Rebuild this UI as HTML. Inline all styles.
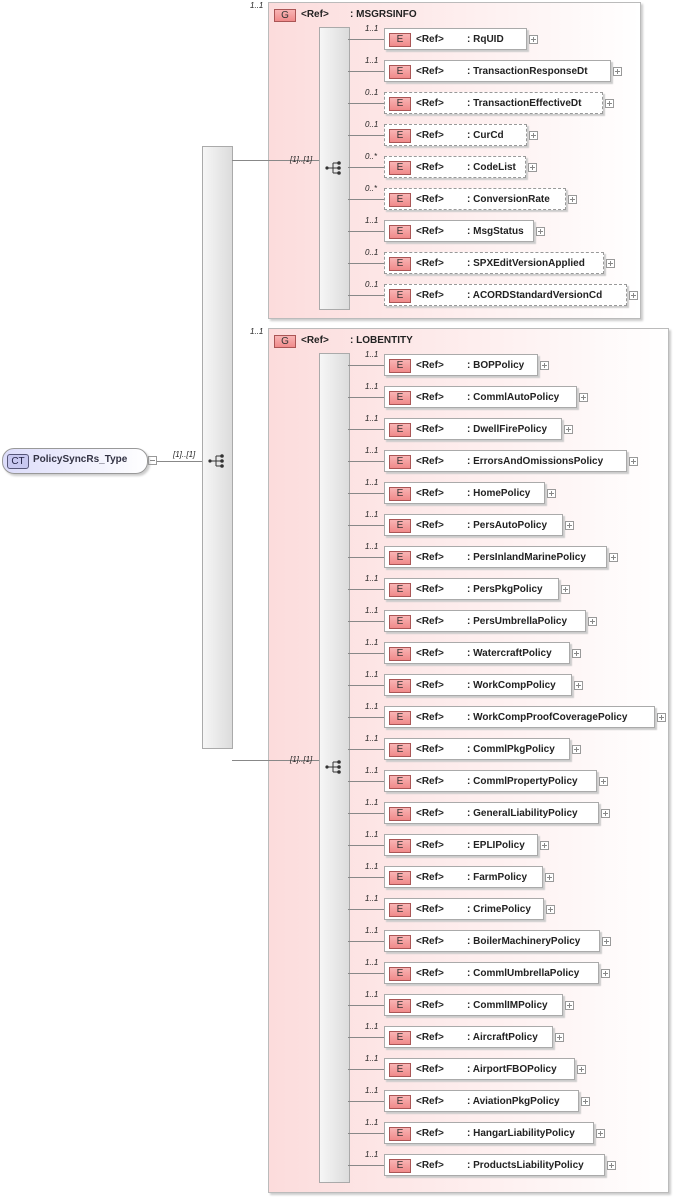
<!DOCTYPE html>
<html><head><meta charset="utf-8"><style>
body{margin:0;width:675px;height:1198px;background:#fff;position:relative;font-family:"Liberation Sans",sans-serif;overflow:hidden}
.a{position:absolute}
.grp{position:absolute;border:1px solid #bbb;background:linear-gradient(90deg,#fcdcdc,#fff);box-shadow:2px 2px 2px #ccc}
.bar{position:absolute;border:1px solid #aaa;background:linear-gradient(90deg,#f6f6f6,#dcdcdc)}
.card{position:absolute;font-size:8px;font-style:italic;color:#222}
.hl{position:absolute;height:1px;background:#888}
.r{position:absolute;left:348px;height:24px;display:flex;align-items:center}
.r .ln{width:36px;height:1px;background:#888}
.r .c{position:absolute;left:17px;top:-3px;font-size:8px;font-style:italic;color:#222}
.b{height:22px;border:1px solid #aaa;background:#fff;box-shadow:2px 2px 1px #ccc;position:relative;font-size:10px;font-weight:bold;color:#222;box-sizing:border-box}
.b.d{border:1px dashed #999}
.e{position:absolute;left:4px;top:4px;width:22px;height:14px;box-sizing:border-box;border:1px solid #a55;background:linear-gradient(#f8b4b4,#f08a8a);font-weight:normal;text-align:center;line-height:12px;color:#333;font-size:10px}
.rf{position:absolute;left:31px;top:5px}
.nm{position:absolute;left:82px;top:5px;white-space:nowrap}
.p{width:7px;height:7px;border:1px solid #999;margin-left:2px;position:relative;top:0px;background:#fff}
.p:before{content:"";position:absolute;left:1px;top:3px;width:5px;height:1px;background:#888}
.p:after{content:"";position:absolute;left:3px;top:1px;width:1px;height:5px;background:#888}
.g{position:absolute;width:22px;height:13px;border:1px solid #a55;background:linear-gradient(#f8b4b4,#f08a8a);font-size:10px;text-align:center;line-height:12px;box-sizing:border-box;color:#333}
.gt{position:absolute;font-size:10px;font-weight:bold;color:#222}
.sq{position:absolute;width:18px;height:14px}
</style></head><body>

<!-- CT -->
<div class="a" style="left:2px;top:448px;width:144px;height:24px;border:1px solid #999;border-radius:12px;background:linear-gradient(90deg,#dcdcfa,#fff);box-shadow:2px 2px 2px #ccc"></div>
<div class="a" style="left:7px;top:454px;width:20px;height:13px;border:1px solid #557;border-radius:3px;background:#c8c8f0;font-size:10px;text-align:center;line-height:13px;color:#224">CT</div>
<div class="a" style="left:33px;top:454px;font-size:10px;font-weight:bold;color:#334">PolicySyncRs_Type</div>
<div class="a" style="left:148px;top:456px;width:7px;height:7px;border:1px solid #999"><div class="a" style="left:1px;top:3px;width:5px;height:1px;background:#888"></div></div>
<div class="hl" style="left:157px;top:461px;width:45px"></div>
<div class="card" style="left:173px;top:450px">[1]..[1]</div>

<div class="bar" style="left:202px;top:146px;width:29px;height:601px"></div>
<svg class="sq" style="left:208px;top:454px" viewBox="0 0 18 14"><circle cx="2" cy="7" r="1.6" fill="#333"/><path d="M2 7H8M8 2V12M8 2H13M8 7H13M8 12H13" stroke="#333" fill="none"/><circle cx="14" cy="2" r="1.8" fill="#333"/><circle cx="14" cy="7" r="1.8" fill="#333"/><circle cx="14" cy="12" r="1.8" fill="#333"/></svg>

<!-- Group 1 -->
<div class="card" style="left:250px;top:1px">1..1</div>
<div class="grp" style="left:268px;top:2px;width:371px;height:315px"></div>
<div class="g" style="left:274px;top:9px">G</div>
<div class="gt" style="left:301px;top:9px">&lt;Ref&gt;</div>
<div class="gt" style="left:350px;top:9px">: MSGRSINFO</div>
<div class="bar" style="left:319px;top:27px;width:29px;height:281px"></div>
<svg class="sq" style="left:325px;top:161px" viewBox="0 0 18 14"><circle cx="2" cy="7" r="1.6" fill="#333"/><path d="M2 7H8M8 2V12M8 2H13M8 7H13M8 12H13" stroke="#333" fill="none"/><circle cx="14" cy="2" r="1.8" fill="#333"/><circle cx="14" cy="7" r="1.8" fill="#333"/><circle cx="14" cy="12" r="1.8" fill="#333"/></svg>

<div class="r" style="top:27px"><i class="c">1..1</i><div class="ln"></div><div class="b" style="width:143px"><span class="e">E</span><span class="rf">&lt;Ref&gt;</span><span class="nm">: RqUID</span></div><span class="p"></span></div>
<div class="r" style="top:59px"><i class="c">1..1</i><div class="ln"></div><div class="b" style="width:227px"><span class="e">E</span><span class="rf">&lt;Ref&gt;</span><span class="nm">: TransactionResponseDt</span></div><span class="p"></span></div>
<div class="r" style="top:91px"><i class="c">0..1</i><div class="ln"></div><div class="b d" style="width:219px"><span class="e">E</span><span class="rf">&lt;Ref&gt;</span><span class="nm">: TransactionEffectiveDt</span></div><span class="p"></span></div>
<div class="r" style="top:123px"><i class="c">0..1</i><div class="ln"></div><div class="b d" style="width:143px"><span class="e">E</span><span class="rf">&lt;Ref&gt;</span><span class="nm">: CurCd</span></div><span class="p"></span></div>
<div class="r" style="top:155px"><i class="c">0..*</i><div class="ln"></div><div class="b d" style="width:142px"><span class="e">E</span><span class="rf">&lt;Ref&gt;</span><span class="nm">: CodeList</span></div><span class="p"></span></div>
<div class="r" style="top:187px"><i class="c">0..*</i><div class="ln"></div><div class="b d" style="width:182px"><span class="e">E</span><span class="rf">&lt;Ref&gt;</span><span class="nm">: ConversionRate</span></div><span class="p"></span></div>
<div class="r" style="top:219px"><i class="c">1..1</i><div class="ln"></div><div class="b" style="width:150px"><span class="e">E</span><span class="rf">&lt;Ref&gt;</span><span class="nm">: MsgStatus</span></div><span class="p"></span></div>
<div class="r" style="top:251px"><i class="c">0..1</i><div class="ln"></div><div class="b d" style="width:220px"><span class="e">E</span><span class="rf">&lt;Ref&gt;</span><span class="nm">: SPXEditVersionApplied</span></div><span class="p"></span></div>
<div class="r" style="top:283px"><i class="c">0..1</i><div class="ln"></div><div class="b d" style="width:243px"><span class="e">E</span><span class="rf">&lt;Ref&gt;</span><span class="nm">: ACORDStandardVersionCd</span></div><span class="p"></span></div>

<!-- Group 2 -->
<div class="card" style="left:250px;top:327px">1..1</div>
<div class="grp" style="left:268px;top:328px;width:399px;height:863px"></div>
<div class="g" style="left:274px;top:335px">G</div>
<div class="gt" style="left:301px;top:335px">&lt;Ref&gt;</div>
<div class="gt" style="left:350px;top:335px">: LOBENTITY</div>
<div class="bar" style="left:319px;top:353px;width:29px;height:828px"></div>
<svg class="sq" style="left:325px;top:760px" viewBox="0 0 18 14"><circle cx="2" cy="7" r="1.6" fill="#333"/><path d="M2 7H8M8 2V12M8 2H13M8 7H13M8 12H13" stroke="#333" fill="none"/><circle cx="14" cy="2" r="1.8" fill="#333"/><circle cx="14" cy="7" r="1.8" fill="#333"/><circle cx="14" cy="12" r="1.8" fill="#333"/></svg>

<div class="hl" style="left:232px;top:160px;width:87px"></div>
<div class="card" style="left:290px;top:155px">[1]..[1]</div>
<div class="hl" style="left:232px;top:760px;width:87px"></div>
<div class="card" style="left:290px;top:755px">[1]..[1]</div>

<div class="r" style="top:353px"><i class="c">1..1</i><div class="ln"></div><div class="b" style="width:154px"><span class="e">E</span><span class="rf">&lt;Ref&gt;</span><span class="nm">: BOPPolicy</span></div><span class="p"></span></div>
<div class="r" style="top:385px"><i class="c">1..1</i><div class="ln"></div><div class="b" style="width:193px"><span class="e">E</span><span class="rf">&lt;Ref&gt;</span><span class="nm">: CommlAutoPolicy</span></div><span class="p"></span></div>
<div class="r" style="top:417px"><i class="c">1..1</i><div class="ln"></div><div class="b" style="width:178px"><span class="e">E</span><span class="rf">&lt;Ref&gt;</span><span class="nm">: DwellFirePolicy</span></div><span class="p"></span></div>
<div class="r" style="top:449px"><i class="c">1..1</i><div class="ln"></div><div class="b" style="width:243px"><span class="e">E</span><span class="rf">&lt;Ref&gt;</span><span class="nm">: ErrorsAndOmissionsPolicy</span></div><span class="p"></span></div>
<div class="r" style="top:481px"><i class="c">1..1</i><div class="ln"></div><div class="b" style="width:161px"><span class="e">E</span><span class="rf">&lt;Ref&gt;</span><span class="nm">: HomePolicy</span></div><span class="p"></span></div>
<div class="r" style="top:513px"><i class="c">1..1</i><div class="ln"></div><div class="b" style="width:179px"><span class="e">E</span><span class="rf">&lt;Ref&gt;</span><span class="nm">: PersAutoPolicy</span></div><span class="p"></span></div>
<div class="r" style="top:545px"><i class="c">1..1</i><div class="ln"></div><div class="b" style="width:223px"><span class="e">E</span><span class="rf">&lt;Ref&gt;</span><span class="nm">: PersInlandMarinePolicy</span></div><span class="p"></span></div>
<div class="r" style="top:577px"><i class="c">1..1</i><div class="ln"></div><div class="b" style="width:175px"><span class="e">E</span><span class="rf">&lt;Ref&gt;</span><span class="nm">: PersPkgPolicy</span></div><span class="p"></span></div>
<div class="r" style="top:609px"><i class="c">1..1</i><div class="ln"></div><div class="b" style="width:202px"><span class="e">E</span><span class="rf">&lt;Ref&gt;</span><span class="nm">: PersUmbrellaPolicy</span></div><span class="p"></span></div>
<div class="r" style="top:641px"><i class="c">1..1</i><div class="ln"></div><div class="b" style="width:186px"><span class="e">E</span><span class="rf">&lt;Ref&gt;</span><span class="nm">: WatercraftPolicy</span></div><span class="p"></span></div>
<div class="r" style="top:673px"><i class="c">1..1</i><div class="ln"></div><div class="b" style="width:188px"><span class="e">E</span><span class="rf">&lt;Ref&gt;</span><span class="nm">: WorkCompPolicy</span></div><span class="p"></span></div>
<div class="r" style="top:705px"><i class="c">1..1</i><div class="ln"></div><div class="b" style="width:271px"><span class="e">E</span><span class="rf">&lt;Ref&gt;</span><span class="nm">: WorkCompProofCoveragePolicy</span></div><span class="p"></span></div>
<div class="r" style="top:737px"><i class="c">1..1</i><div class="ln"></div><div class="b" style="width:186px"><span class="e">E</span><span class="rf">&lt;Ref&gt;</span><span class="nm">: CommlPkgPolicy</span></div><span class="p"></span></div>
<div class="r" style="top:769px"><i class="c">1..1</i><div class="ln"></div><div class="b" style="width:213px"><span class="e">E</span><span class="rf">&lt;Ref&gt;</span><span class="nm">: CommlPropertyPolicy</span></div><span class="p"></span></div>
<div class="r" style="top:801px"><i class="c">1..1</i><div class="ln"></div><div class="b" style="width:215px"><span class="e">E</span><span class="rf">&lt;Ref&gt;</span><span class="nm">: GeneralLiabilityPolicy</span></div><span class="p"></span></div>
<div class="r" style="top:833px"><i class="c">1..1</i><div class="ln"></div><div class="b" style="width:154px"><span class="e">E</span><span class="rf">&lt;Ref&gt;</span><span class="nm">: EPLIPolicy</span></div><span class="p"></span></div>
<div class="r" style="top:865px"><i class="c">1..1</i><div class="ln"></div><div class="b" style="width:159px"><span class="e">E</span><span class="rf">&lt;Ref&gt;</span><span class="nm">: FarmPolicy</span></div><span class="p"></span></div>
<div class="r" style="top:897px"><i class="c">1..1</i><div class="ln"></div><div class="b" style="width:160px"><span class="e">E</span><span class="rf">&lt;Ref&gt;</span><span class="nm">: CrimePolicy</span></div><span class="p"></span></div>
<div class="r" style="top:929px"><i class="c">1..1</i><div class="ln"></div><div class="b" style="width:216px"><span class="e">E</span><span class="rf">&lt;Ref&gt;</span><span class="nm">: BoilerMachineryPolicy</span></div><span class="p"></span></div>
<div class="r" style="top:961px"><i class="c">1..1</i><div class="ln"></div><div class="b" style="width:215px"><span class="e">E</span><span class="rf">&lt;Ref&gt;</span><span class="nm">: CommlUmbrellaPolicy</span></div><span class="p"></span></div>
<div class="r" style="top:993px"><i class="c">1..1</i><div class="ln"></div><div class="b" style="width:179px"><span class="e">E</span><span class="rf">&lt;Ref&gt;</span><span class="nm">: CommlIMPolicy</span></div><span class="p"></span></div>
<div class="r" style="top:1025px"><i class="c">1..1</i><div class="ln"></div><div class="b" style="width:169px"><span class="e">E</span><span class="rf">&lt;Ref&gt;</span><span class="nm">: AircraftPolicy</span></div><span class="p"></span></div>
<div class="r" style="top:1057px"><i class="c">1..1</i><div class="ln"></div><div class="b" style="width:191px"><span class="e">E</span><span class="rf">&lt;Ref&gt;</span><span class="nm">: AirportFBOPolicy</span></div><span class="p"></span></div>
<div class="r" style="top:1089px"><i class="c">1..1</i><div class="ln"></div><div class="b" style="width:195px"><span class="e">E</span><span class="rf">&lt;Ref&gt;</span><span class="nm">: AviationPkgPolicy</span></div><span class="p"></span></div>
<div class="r" style="top:1121px"><i class="c">1..1</i><div class="ln"></div><div class="b" style="width:210px"><span class="e">E</span><span class="rf">&lt;Ref&gt;</span><span class="nm">: HangarLiabilityPolicy</span></div><span class="p"></span></div>
<div class="r" style="top:1153px"><i class="c">1..1</i><div class="ln"></div><div class="b" style="width:221px"><span class="e">E</span><span class="rf">&lt;Ref&gt;</span><span class="nm">: ProductsLiabilityPolicy</span></div><span class="p"></span></div>

</body></html>
